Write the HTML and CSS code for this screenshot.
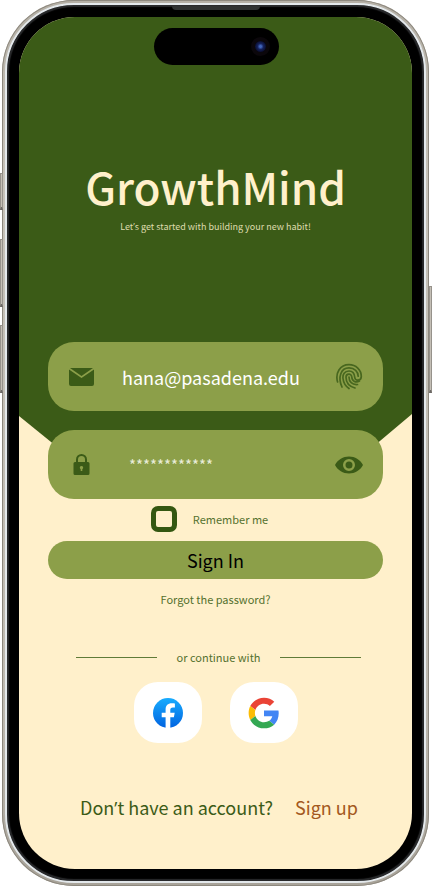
FILE: index.html
```html
<!DOCTYPE html>
<html lang="en">
<head>
<meta charset="utf-8">
<meta name="viewport" content="width=device-width, initial-scale=1">
<title>GrowthMind</title>
<link rel="stylesheet" href="styles.css">
</head>
<body>
<div class="phone">
  <span class="key key-action"></span>
  <span class="key key-up"></span>
  <span class="key key-down"></span>
  <span class="key key-power"></span>
  <div class="bezel">
    <span class="speaker"></span>
    <main class="screen">
      <div class="backdrop"></div>
      <div class="island"><span class="camera"></span></div>
      <header class="hero">
        <h1 class="title">GrowthMind</h1>
        <p class="tagline">Let<span class="apostrophe">’</span>s get started with building your new habit!</p>
      </header>
      <form class="form">
        <div class="field">
          <svg class="icon" viewBox="0 0 28 28" aria-hidden="true">
            <path class="fill" d="M2 5h23l-11.500 8zM1 6.500l12.500 8.500L26 6.500V21a2 2 0 0 1-2 2H3a2 2 0 0 1-2-2z"/>
          </svg>
          <input class="input" type="email" value="hana@pasadena.edu" aria-label="Email">
          <button class="icon-button" type="button" aria-label="Use fingerprint">
            <svg class="icon" viewBox="0 0 28 28" aria-hidden="true">
              <g class="line">
                <path d="M2.600 19C0 10 5 1.700 14 1.700c7 0 12.300 5.300 12.300 11.800 0 4.500-6 5-6.500 1C19.500 10.500 17.500 8 14 8 9.500 8 7.500 11.500 8 15.500c.5 4.500 3 8 6 10"/>
                <path d="M7 24C2.500 14 6 4.900 14 4.900c5.500 0 9.200 3.900 9.200 8.300"/>
                <path d="M20 25C14.500 23.500 11 19.500 11 14.300c0-4 5.600-4.300 5.800-.3.200 4.500 4.200 6 7.700 4"/>
                <path d="M14 14c0 4.500 3 8 8.500 7.500"/>
              </g>
            </svg>
          </button>
        </div>
        <div class="field">
          <svg class="icon" viewBox="0 0 28 28" aria-hidden="true">
            <path class="lock-arch" d="M9 12V8.500a4.500 4.500 0 0 1 9 0V12"/>
            <path class="fill" fill-rule="evenodd" d="M7 11h13a1.500 1.500 0 0 1 1.500 1.500v10A1.500 1.500 0 0 1 20 24H7a1.500 1.500 0 0 1-1.500-1.500v-10A1.500 1.500 0 0 1 7 11zm6.500 4a1.700 1.700 0 0 0-.8 3.200V20h1.600v-1.800a1.700 1.700 0 0 0-.8-3.200z"/>
          </svg>
          <input class="input masked" type="text" value="************" aria-label="Password">
          <button class="icon-button" type="button" aria-label="Show password">
            <svg class="icon" viewBox="0 0 28 28" aria-hidden="true">
              <path class="fill" fill-rule="evenodd" d="M14 5.500c6 0 11 3 14 8.500-3 5.500-8 8.500-14 8.500S3 19.500 0 14c3-5.500 8-8.500 14-8.500zM14 8a6 6 0 1 0 0 12 6 6 0 0 0 0-12zm0 2.500a3.500 3.500 0 1 1 0 7 3.500 3.500 0 0 1 0-7z"/>
            </svg>
          </button>
        </div>
        <label class="remember"><input class="check" type="checkbox">Remember me</label>
        <button class="submit" type="submit">Sign In</button>
        <a class="forgot" href="#">Forgot the password?</a>
      </form>
      <div class="divider">or continue with</div>
      <div class="social">
        <button class="social-button" type="button" aria-label="Facebook">
          <svg class="logo" viewBox="0 0 32 32" aria-hidden="true">
            <defs><linearGradient id="fb" x1="0" y1="0" x2="0" y2="1"><stop offset="0" stop-color="#18acfe"/><stop offset="1" stop-color="#0163e0"/></linearGradient></defs>
            <circle cx="16" cy="16" r="15" fill="url(#fb)"/>
            <path fill="#fff" d="M13.600 31.200V20.300H9.700v-4.600h3.900v-3.300c0-4 2.400-6.100 6-6.100 1.200 0 2.400.1 3.300.3v3.900h-2c-2 0-2.600 1-2.600 2.300v2.900h4.400l-.8 4.600h-3.600v10.900z"/>
          </svg>
        </button>
        <button class="social-button" type="button" aria-label="Google">
          <svg class="logo" viewBox="-1 -1 50 50" aria-hidden="true">
            <path fill="#ea4335" d="M24 9.500c3.540 0 6.710 1.220 9.210 3.600l6.850-6.850C35.900 2.380 30.470 0 24 0 14.620 0 6.510 5.380 2.560 13.220l7.980 6.190C12.430 13.720 17.740 9.500 24 9.500z"/>
            <path fill="#4285f4" d="M46.980 24.550c0-1.570-.15-3.090-.38-4.550H24v9.020h12.940c-.58 2.960-2.260 5.480-4.780 7.180l7.730 6c4.510-4.180 7.090-10.360 7.090-17.650z"/>
            <path fill="#fbbc05" d="M10.530 28.590c-.48-1.450-.76-2.990-.76-4.590s.27-3.140.76-4.590l-7.980-6.190C.92 16.460 0 20.120 0 24s.92 7.540 2.560 10.780z"/>
            <path fill="#34a853" d="M24 48c6.480 0 11.930-2.130 15.890-5.810l-7.730-6c-2.150 1.450-4.920 2.300-8.160 2.300-6.260 0-11.570-4.220-13.470-9.910l-7.980 6.190C6.510 42.620 14.620 48 24 48z"/>
          </svg>
        </button>
      </div>
      <footer class="signup"><span>Don<span class="apostrophe">’</span>t have an account?</span><a class="signup-link" href="#">Sign up</a></footer>
    </main>
  </div>
</div>
</body>
</html>
```
FILE: styles.css
```css
:root {
  --forest: #3b5b17;
  --sage: #8c9f49;
  --cream: #fff0cb;
}

* { box-sizing: border-box; }

body {
  margin: 0;
  background: #fff;
  color: var(--forest);
  font-family: "Noto Sans CJK SC", "Noto Sans", sans-serif;
}

button, input { font: inherit; color: inherit; }
a { color: inherit; text-decoration: none; }

/* The CJK family draws this mark full width. */
.apostrophe { font-family: "Open Sans", sans-serif; line-height: 1; }

.phone {
  position: relative;
  display: flex;
  min-height: 100vh;
  margin: 0 3px 0 2px;
  padding: 3px;
  border-radius: 72px;
  background: linear-gradient(#b5b0a6, #c6c2b9 20%, #bdb9b0 80%, #a8a399);
  box-shadow: inset 0 0 0 1px #8d887e;
}

.key {
  position: absolute;
  width: 3px;
  background: #c4bfb6;
  border: 1px solid #96928b;
  border-bottom: 3px solid #6c6965;
}
.key-action { left: -2px; top: 173px; height: 37px; }
.key-up { left: -2px; top: 239px; height: 68px; }
.key-down { left: -2px; top: 325px; height: 68px; }
.key-power { right: -3px; top: 286px; height: 107px; }

.bezel {
  position: relative;
  flex: 1;
  display: flex;
  min-width: 0;
  padding: 12px;
  border: 2px solid #e4e9ec;
  border-radius: 69px;
  background: #000;
  box-shadow: inset 0 0 1px 2px #292a2c;
}

.speaker {
  position: absolute;
  top: 1px;
  left: 50%;
  width: 88px;
  height: 4px;
  margin-left: -44px;
  border-radius: 0 0 4px 4px;
  background: #303333;
}

.screen {
  position: relative;
  flex: 1;
  min-width: 0;
  overflow: hidden;
  border-radius: 56px;
  background: var(--cream);
}

.backdrop {
  position: absolute;
  inset: 0 0 auto;
  height: 450px;
  background: var(--forest);
  clip-path: polygon(0 0, 100% 0, 100% 397px, 84% 450px, 16% 450px, 0 399px);
}

.island {
  position: absolute;
  top: 11px;
  left: 50%;
  width: 125px;
  height: 37px;
  margin-left: -62px;
  border-radius: 19px;
  background: #000;
}
.camera {
  position: absolute;
  top: 9px;
  right: 9px;
  width: 19px;
  height: 19px;
  border: 4px solid #0b070b;
  border-radius: 50%;
  background: radial-gradient(circle, #4063b8 0 1px, #15215c 3px, #080b24 6px);
}

.hero {
  position: relative;
  padding-top: 139px;
  text-align: center;
  color: var(--cream);
}
.title {
  margin: 0 0 3px;
  font-size: 44px;
  font-weight: 500;
  line-height: 60px;
}
.tagline {
  margin: 0;
  font-size: 9px;
  line-height: 16px;
  color: #dfdcae;
}

.form {
  position: relative;
  display: flex;
  flex-direction: column;
  align-items: center;
  margin: 107px 29px 0;
}
.field {
  display: flex;
  align-items: center;
  width: 100%;
  height: 69px;
  margin-bottom: 19px;
  padding: 0 20px;
  border-radius: 26px;
  background: var(--sage);
}
.field + .field { margin-bottom: 7px; }
.icon { display: block; flex: none; width: 28px; height: 28px; }
.fill { fill: var(--forest); }
.line { fill: none; stroke: #48671f; stroke-width: 1.7; stroke-linecap: round; }
.lock-arch { fill: none; stroke: var(--forest); stroke-width: 2; }
.input {
  flex: 1;
  min-width: 0;
  height: 40px;
  margin-left: 26px;
  padding: 0;
  border: 0;
  outline: 0;
  background: none;
  color: #fff;
  font-size: 18px;
}
.masked {
  padding-left: 7px;
  font-size: 15px;
  color: #e9edda;
}
.icon-button { padding: 0; border: 0; background: none; }

.remember {
  display: flex;
  align-items: center;
  gap: 16px;
  padding-right: 12px;
  font-size: 11px;
  line-height: 16px;
  color: #54712e;
}
.check {
  appearance: none;
  width: 26px;
  height: 26px;
  margin: 0;
  border: 5px solid #345711;
  border-radius: 7px;
}
.submit {
  width: 100%;
  height: 38px;
  margin-top: 9px;
  padding: 0;
  border: 0;
  border-radius: 19px;
  background: var(--sage);
  color: #000;
  font-size: 18px;
  line-height: 38px;
}
.forgot {
  margin-top: 12px;
  font-size: 11px;
  line-height: 16px;
  color: #54712e;
}

.divider {
  display: flex;
  align-items: center;
  gap: 20px;
  margin: 42px 51px 0 57px;
  font-size: 11px;
  line-height: 16px;
  color: #54712e;
}
.divider::before,
.divider::after {
  content: "";
  flex: 1;
  height: 1px;
  background: #607b38;
}

.social {
  display: flex;
  justify-content: center;
  gap: 28px;
  margin-top: 17px;
}
.social-button {
  display: grid;
  place-items: center;
  width: 68px;
  height: 61px;
  padding: 0;
  border: 0;
  border-radius: 24px;
  background: #fff;
}
.logo { width: 32px; height: 32px; }

.signup {
  display: flex;
  justify-content: center;
  gap: 22px;
  margin-top: 52px;
  padding: 0 0 48px 7px;
  font-size: 18px;
  line-height: 24px;
}
.signup-link { color: #a35820; }
```
